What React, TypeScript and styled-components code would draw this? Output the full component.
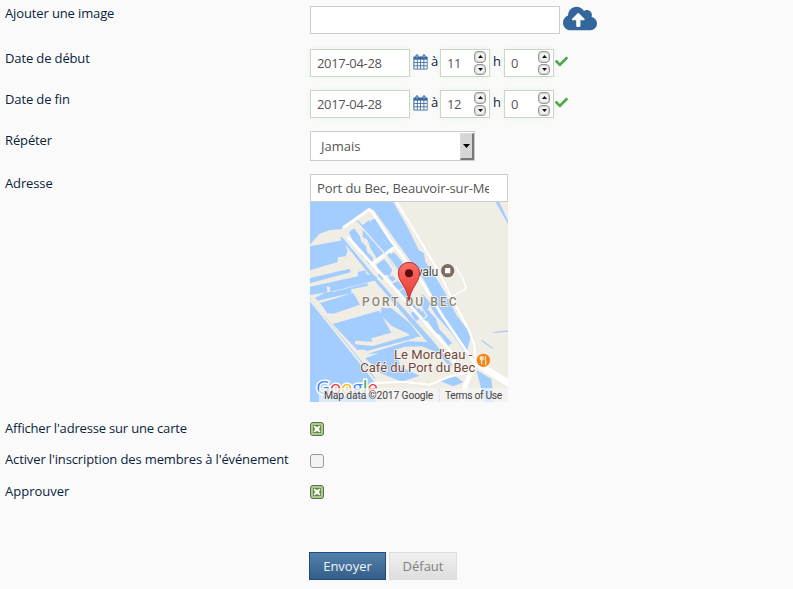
import React from 'react';
import styled, { createGlobalStyle, css } from 'styled-components';
import { FaCheck, FaCloudUploadAlt } from 'react-icons/fa';

const GlobalStyle = createGlobalStyle`
  * { box-sizing: border-box; }
  body {
    margin: 0;
    background: #fafafa;
    color: #0a1f3a;
    font: 13px/18px "Open Sans", "Noto Sans", sans-serif;
  }
  input, button { font: inherit; }
`;

const Form = styled.form`
  width: 793px;
  height: 589px;
  padding-top: 6px;
  overflow: hidden;
`;

const Row = styled.div<{ $height: number; $labelOffset?: number }>`
  display: grid;
  grid-template-columns: 305px 1fr;
  align-items: start;
  height: ${p => p.$height}px;
  padding-left: 5px;
  > label { margin-top: ${p => p.$labelOffset ?? 0}px; }
`;

const Label = styled.label<{ $tracking?: number }>`
  white-space: nowrap;
  letter-spacing: ${p => p.$tracking ?? -0.13}px;
`;

const Controls = styled.div`
  display: flex;
  align-items: flex-start;
`;

const fieldBox = css<{ $valid?: boolean }>`
  border: 1px solid ${p => (p.$valid ? '#c3dcc0' : '#ccc')};
  background: #fff;
  color: #555;
  ${p => p.$valid && 'box-shadow: 0 0 5px rgba(0, 0, 0, 0.05);'}
`;

const TextField = styled.input<{ $width: number; $valid?: boolean; $tracking?: number }>`
  ${fieldBox}
  display: block;
  width: ${p => p.$width}px;
  height: 28px;
  padding: 0 18px 1px 6px;
  outline: 0;
  border-radius: 0;
  letter-spacing: ${p => p.$tracking ?? 0}px;
`;

const NumberBox = styled.div<{ $valid?: boolean }>`
  ${fieldBox}
  display: flex;
  justify-content: space-between;
  width: 50px;
  height: 28px;
  padding: 0 3px 1px 6px;
`;

const NumberInput = styled.input`
  width: 24px;
  padding: 0;
  border: 0;
  outline: 0;
  background: transparent;
  color: inherit;
  letter-spacing: -0.4px;
`;

const Steppers = styled.div`
  display: flex;
  flex-direction: column;
  gap: 1px;
  padding-top: 1px;
`;

const Stepper = styled.button`
  display: flex;
  align-items: center;
  justify-content: center;
  width: 12px;
  height: 11.5px;
  padding: 0;
  border: 1px solid #999;
  border-radius: 4px;
  background: #f1f1f1;
  box-shadow: inset 0 0 0 1px #d2d2d2;
  svg { display: block; }
`;

const Word = styled.span<{ $width: number }>`
  width: ${p => p.$width}px;
  margin-top: 3px;
  padding-left: 3px;
`;

const IconSlot = styled.span<{ $color: string; $top: number; $left: number }>`
  display: block;
  margin: ${p => p.$top}px 0 0 ${p => p.$left}px;
  color: ${p => p.$color};
  svg { display: block; }
`;

const CloudIcon = styled(FaCloudUploadAlt)`
  width: 34px;
  height: 27px;
`;

const SelectBox = styled.div`
  ${fieldBox}
  display: flex;
  justify-content: space-between;
  width: 165px;
  height: 30px;
  padding: 1px 0 0 10px;
  line-height: 26px;
`;

const SelectArrow = styled.span`
  display: flex;
  align-items: center;
  justify-content: center;
  width: 14px;
  height: 27px;
  border: 1px solid #ddd;
  border-right: 2px solid #777;
  border-bottom: 2px solid #777;
  background: #d6d6d6;
`;

const AddressBlock = styled.div`
  width: 198px;
`;

const MapFrame = styled.div`
  width: 198px;
  height: 200px;
  svg { display: block; }
`;

const Check = styled.span<{ $checked?: boolean }>`
  display: flex;
  align-items: center;
  justify-content: center;
  width: 14px;
  height: 14px;
  border: 1px solid ${p => (p.$checked ? '#626a5b' : '#999')};
  border-radius: 3px;
  background: ${p => (p.$checked ? '#a9ce87' : '#f3f3f3')};
`;

const Actions = styled.div`
  display: flex;
  gap: 3px;
  padding-left: 309px;
`;

const Button = styled.button<{ $primary?: boolean; $width: number }>`
  width: ${p => p.$width}px;
  height: 28px;
  padding: 0;
  border: 1px solid ${p => (p.$primary ? '#1f4c7f' : '#ddd')};
  background: ${p => (p.$primary
    ? 'linear-gradient(#5380aa, #335e89)'
    : 'linear-gradient(#f0f0f0, #dedede)')};
  color: ${p => (p.$primary ? '#eef3f8' : '#808080')};
`;

const Calendar = () => (
  <svg width="15" height="16" viewBox="0 0 15 16">
    <path d="M1.2 2.5h12.6q.8 0 .8.8v11.4q0 .8-.8.8H1.2q-.8 0-.8-.8V3.3q0-.8.8-.8z" fill="#33669c" />
    <g fill="#fafafa">
      {[5.6, 8.9, 12.2].map(y =>
        [1.4, 4.7, 8, 11.3].map(x => (
          <rect key={`${x}-${y}`} x={x} y={y} width="2.5" height="2.5" />
        )),
      )}
    </g>
    <g fill="#b9cde1" stroke="#33669c" strokeWidth="1">
      <rect x="3" y=".7" width="2" height="3.6" rx="1" />
      <rect x="10" y=".7" width="2" height="3.6" rx="1" />
    </g>
  </svg>
);

const NumberField = ({ value }: { value: string }) => (
  <NumberBox $valid>
    <NumberInput defaultValue={value} />
    <Steppers>
      <Stepper type="button">
        <svg width="5" height="3" viewBox="0 0 5 3"><path d="M2.5 0 5 3H0z" fill="#111" /></svg>
      </Stepper>
      <Stepper type="button">
        <svg width="5" height="3" viewBox="0 0 5 3"><path d="M0 0h5L2.5 3z" fill="#111" /></svg>
      </Stepper>
    </Steppers>
  </NumberBox>
);

const DateRow = ({ label, date, hour }: { label: string; date: string; hour: string }) => (
  <Row $height={41}>
    <Label>{label}</Label>
    <Controls>
      <TextField $width={100} $valid $tracking={-0.32} defaultValue={date} />
      <IconSlot $color="#33669c" $top={5} $left={3}><Calendar /></IconSlot>
      <Word $width={12}>à</Word>
      <NumberField value={hour} />
      <Word $width={14}>h</Word>
      <NumberField value="0" />
      <IconSlot $color="#4fa64f" $top={6} $left={1}><FaCheck size={13} /></IconSlot>
    </Controls>
  </Row>
);

const Checkbox = ({ checked }: { checked?: boolean }) => (
  <Check $checked={checked}>
    {checked && (
      <svg width="8" height="8" viewBox="0 0 8 8">
        <rect x=".5" y=".5" width="7" height="7" fill="#8aaf6b" stroke="#648048" />
        <path d="M1 1l6 6m0-6l-6 6" stroke="#fff" strokeWidth="1.6" />
        <rect x="2.2" y="2.2" width="3.6" height="3.6" fill="#fff" />
      </svg>
    )}
  </Check>
);

const AreaMap = () => (
  <svg width="198" height="200" viewBox="6 6 594 600">
    <rect x="6" y="6" width="594" height="600" fill="#a3ccff" />
    <g fill="#f0ede5">
      <path d="M256 6H600V606H500L480 540 490 480 478 450 488 410 475 385 445 345 418 290 385 235 352 185 348 160 332 150 300 85z" />
      <path d="M6 134L20 118 35 101 65 90 98 88 183 23 198 31 215 55 262 120 345 235 376 292 365 315 385 347 430 398 472 458 500 490 500 606H205L200 545 6 294z" />
    </g>
    <g fill="#a3ccff">
      <path d="M6 139L107 120 119 152 113 169 90 172 88 187 6 210z" />
      <path d="M6 234L125 206 128 217 52 237 6 250z" />
      <path d="M6 260L150 229 149 216 172 211 176 223 206 230 207 240 66 276 66 262 56 259 58 277 6 285z" />
      <path d="M20 294L54 277 78 275 178 249 180 257 130 268 130 281 90 288 30 302z" />
      <path d="M36 309L136 279 156 314 76 341 58 340z" />
      <path d="M74 372L213 332 250 398 190 415 193 425 142 422 140 433 196 438 194 446 148 450z" />
      <path d="M221 320l29 5 55 44 33 42-20-1-66-32-35-34z" />
      <path d="M165 447l142-42 23 1-10 9-144 38z" />
      <path d="M172 475l64-24 24-1 18 50 57 27-54 18-64-26z" />
      <path d="M178 462l122-38 60 2 45 28-11 6-52-21-53 1-50 18z" />
      <path d="M6 322L185 545 190 562 150 606H6z" />
      <path d="M44 351l8 0 150 183-5 5z" />
      <path d="M123 96l15-11 17 22 5 18 14 14 3 17 17 15 1 18-13 4-9-17-12-9-8-21-18-19z" />
      <path d="M164 75l19-14 47 62 18 21-42 31-19-31-8-24-15-9z" />
      <path d="M144 65l6-4 109 112-7 8z" />
      <path d="M188 61l17-6 58 82-17 7-20-28-11-3-8-22-16-11z" />
      <path d="M205 194l24-17 24 33-8 18-13-4-8 17-14-14 4-11z" />
      <path d="M237 171l21-14 25 28-1 42-25-29z" />
      <path d="M240 231l13-5 10 11-10 8zM252 251l18-9 16 21-17 10zM272 276l14-10 19 24-12 10zM290 310l19-10 18 26-10 10z" />
      <path d="M308 340l24-17 28 36-12 12-14-16-10 9zM343 282l24 27-8 20 25 28 10 30 38 42-11 8-25-33-14-6-40-62z" />
      <path d="M94 111l10 2 96 116 172 190 62 77-8 4-76-83-157-183z" />
      <path d="M505 510l45 27 8 69h-28zM394 542l48-14 24 19-30 12z" />
      <path d="M563 6h11l26 56v10z" />
      <path d="M522 420l34 24-3 2-34-24zM557 396l43-5v4l-43 4z" />
    </g>
    <g fill="none" stroke="#fff" strokeWidth="6">
      <path d="M265 6L307 73 395 220 430 292 482 389 499 435 503 488" />
      <path d="M105 83L183 29 194 38 245 117 344 250 405 350 498 487" strokeWidth="8" />
      <path d="M120 112l71 79 66 71 135 151 40 47 14 61M190 193l68-50" strokeWidth="9" />
      <path d="M147 66l107 122 60 93 43 67-15 12" stroke="#f0ede5" strokeWidth="4" />
      <path d="M6 300L202 544M66 360L214 318 240 322" stroke="#f0ede5" />
      <path d="M408 292l22 0 44-26-8-29-24-38" strokeWidth="4" />
      <path d="M503 488l-30 65-11 53" strokeWidth="14" />
      <path d="M503 488l100 63" strokeWidth="20" />
      <path d="M190 550l95-5 81 9 55-23 76-18" />
    </g>
    <g fontFamily='Roboto, "Open Sans", sans-serif' paintOrder="stroke" stroke="#f8f6f2" strokeWidth="5" strokeLinejoin="round">
      <text x="326" y="227" fontSize="37" fill="#4b4848" textLength="65">valu</text>
      <text x="162" y="318" fontSize="36" fontWeight="500" fill="#8c8576" textLength="284">PORT DU BEC</text>
      <text x="258" y="476" fontSize="39" fill="#70483e" textLength="235">Le Mord'eau -</text>
      <text x="157" y="515" fontSize="39" fill="#70483e" textLength="345">Café du Port du Bec</text>
    </g>
    <circle cx="419" cy="212" r="20" fill="#806a63" />
    <rect x="411" y="204" width="16" height="16" rx="2" fill="#fff" />
    <circle cx="526" cy="481" r="20" fill="#f18719" />
    <path d="M517 469v8q0 4 4 4v12m4-24v8q0 4-4 4m0-12v10m12-10q-4 9 0 12v14" fill="none" stroke="#fff" strokeWidth="3" />
    <linearGradient id="pin" x1="0" y1="0" x2="0" y2="1">
      <stop offset="0" stopColor="#fb6f66" />
      <stop offset="1" stopColor="#e43a33" />
    </linearGradient>
    <path d="M303 302C299 264 271 246 271 219a32 32 0 0 1 64 0C335 246 307 264 303 302z" fill="url(#pin)" stroke="#b9302a" strokeWidth="3" />
    <circle cx="303" cy="220" r="12" fill="#5a0d0b" />
    <text x="25" y="582" fontSize="56" fontFamily='"Open Sans", sans-serif' textLength="185" lengthAdjust="spacingAndGlyphs" paintOrder="stroke" stroke="#fff" strokeWidth="9">
      <tspan fill="#4285f4">G</tspan><tspan fill="#ea4335">o</tspan><tspan fill="#fbbc05">o</tspan><tspan fill="#4285f4">g</tspan><tspan fill="#34a853">l</tspan><tspan fill="#ea4335">e</tspan>
    </text>
    <rect x="33" y="564" width="567" height="42" fill="#f5f5f5" fillOpacity=".72" />
    <g fontFamily="Roboto, sans-serif" fontSize="31" fill="#444">
      <text x="48" y="597" textLength="328">Map data ©2017 Google</text>
      <text x="411" y="597" textLength="172">Terms of Use</text>
    </g>
    <path d="M394 564v42" stroke="#ddd" strokeWidth="2" />
  </svg>
);

export default function App() {
  return (
    <>
      <GlobalStyle />
      <Form>
        <Row $height={43} $labelOffset={-2}>
          <Label>Ajouter une image</Label>
          <Controls>
            <TextField $width={250} />
            <IconSlot $color="#33669c" $top={-1} $left={3}>
              <CloudIcon preserveAspectRatio="none" />
            </IconSlot>
          </Controls>
        </Row>
        <DateRow label="Date de début" date="2017-04-28" hour="11" />
        <DateRow label="Date de fin" date="2017-04-28" hour="12" />
        <Row $height={43}>
          <Label>Répéter</Label>
          <SelectBox>
            Jamais
            <SelectArrow>
              <svg width="7" height="4" viewBox="0 0 7 4"><path d="M0 0h7L3.5 4z" /></svg>
            </SelectArrow>
          </SelectBox>
        </Row>
        <Row $height={248}>
          <Label>Adresse</Label>
          <AddressBlock>
            <TextField $width={198} $tracking={-0.11} defaultValue="Port du Bec, Beauvoir-sur-Mer" />
            <MapFrame><AreaMap /></MapFrame>
          </AddressBlock>
        </Row>
        <Row $height={32} $labelOffset={-3}>
          <Label $tracking={-0.18}>Afficher l'adresse sur une carte</Label>
          <Checkbox checked />
        </Row>
        <Row $height={31} $labelOffset={-4}>
          <Label>Activer l'inscription des membres à l'événement</Label>
          <Checkbox />
        </Row>
        <Row $height={67} $labelOffset={-3}>
          <Label $tracking={0}>Approuver</Label>
          <Checkbox checked />
        </Row>
        <Actions>
          <Button type="button" $primary $width={77}>Envoyer</Button>
          <Button type="button" $width={68}>Défaut</Button>
        </Actions>
      </Form>
    </>
  );
}
